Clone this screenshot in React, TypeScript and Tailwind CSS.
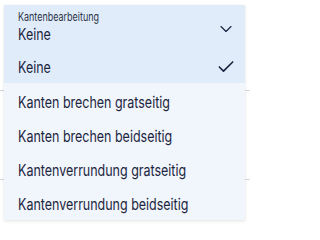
import { Check, ChevronDown } from "lucide-react";

const options = [
  "Kanten brechen gratseitig",
  "Kanten brechen beidseitig",
  "Kantenverrundung gratseitig",
  "Kantenverrundung beidseitig",
];

// the text in this dropdown is set rather narrow
const narrow = "inline-block origin-left scale-x-[0.78] whitespace-nowrap";

const App = () => {
  return (
    <div className="relative w-[250px] h-[227px] bg-white overflow-hidden font-['Inter',sans-serif]">
      <div className="absolute left-0 right-0 top-[90px] h-px bg-[#d4d7dd]" />
      <div className="absolute left-0 right-0 top-[179px] h-px bg-[#d4d7dd]" />
      <div className="relative ml-[4px] mt-[5px] w-[241px] bg-[#f1f5fc] shadow-[0_1px_3px_rgba(0,0,0,0.12)]">
        <div className="bg-[#e1ecfb]">
          <div className="flex items-center justify-between pl-[14px] pr-[9px] h-[44px]">
            <div className="flex flex-col">
              <span className={`${narrow} text-[11.5px] leading-[14px] text-[#2b3547]`}>Kantenbearbeitung</span>
              <span className={`${narrow} text-[16px] leading-[20px] text-[#1c2640]`}>Keine</span>
            </div>
            <ChevronDown className="w-[20px] h-[20px] mt-[4px] text-[#1c2640]" strokeWidth={1.4} />
          </div>
          <div className="flex items-center justify-between pl-[14px] pr-[9px] h-[34px] pt-[2px]">
            <span className={`${narrow} text-[16px] text-[#1c2640]`}>Keine</span>
            <Check className="w-[20px] h-[20px] text-[#1c2640]" strokeWidth={2} />
          </div>
        </div>
        <div className="flex flex-col pb-[1px]">
          {options.map((o) => (
            <div key={o} className="flex items-center pl-[14px] h-[34px] pt-[3px] text-[16px] text-[#1c2640]">
              <span className={narrow}>{o}</span>
            </div>
          ))}
        </div>
      </div>
    </div>
  );
};

export default App;
